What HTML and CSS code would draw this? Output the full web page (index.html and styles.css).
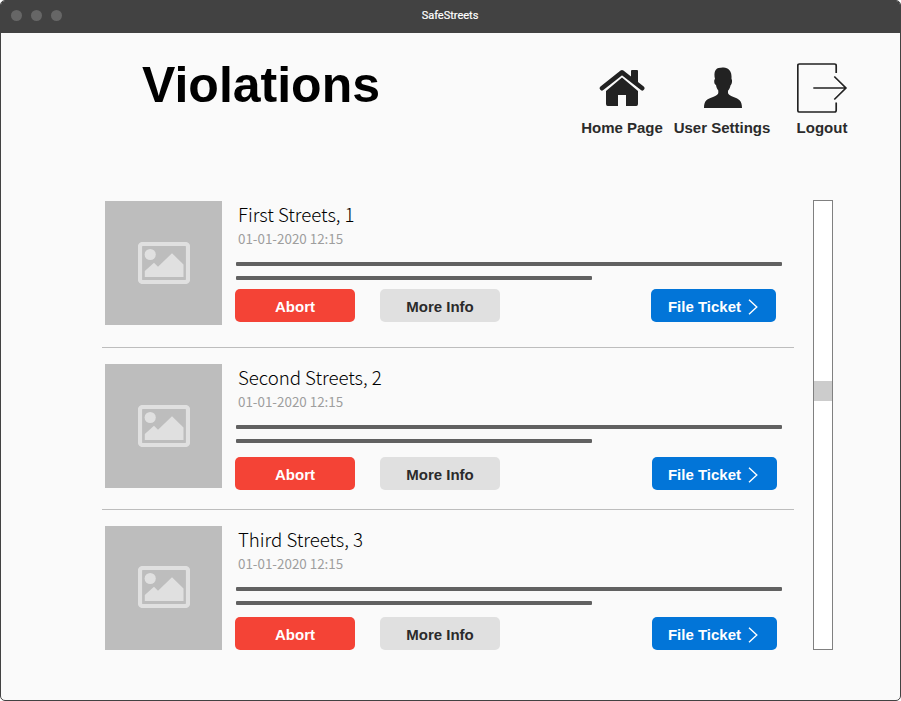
FILE: index.html
```html
<!DOCTYPE html>
<html lang="en">
<head>
<meta charset="utf-8">
<title>SafeStreets</title>
<link rel="stylesheet" href="styles.css">
</head>
<body>
<svg class="defs" aria-hidden="true">
  <symbol id="picture" viewBox="0 0 52 42">
    <rect x="2" y="2" width="48" height="38" rx="2.5" fill="none" stroke="#e0e0e0" stroke-width="4.2"/>
    <circle cx="12.2" cy="12.5" r="5.6" fill="#e0e0e0"/>
    <path d="M6.8 35V29L16 20.8L20 24.8L34 11.2L45.5 22.5V35Z" fill="#e0e0e0"/>
  </symbol>
  <symbol id="chevron" viewBox="0 0 10 16">
    <path d="M1 .8L8.8 8L1 15.2" fill="none" stroke="#fff" stroke-width="1.4"/>
  </symbol>
</svg>
<div class="window">
  <header class="titlebar">
    <div class="dots"><span></span><span></span><span></span></div>
    <div class="app-name">SafeStreets</div>
    <div></div>
  </header>
  <div class="top">
    <h1>Violations</h1>
    <nav>
      <a class="nav-item home">
        <svg viewBox="0 0 52 50"><path fill="#222" d="M10 41V28L26 14.600L42 28V41Q42 43 40.300 43H30V32H22V43H11.700Q10 43 10 41Z"/><path d="M5.900 25.200L26 9.400L46.300 25.200" fill="none" stroke="#222" stroke-width="4.600" stroke-linecap="round" stroke-linejoin="round"/><path fill="#222" d="M35 8Q35 7 36 7H41Q42 7 42 8V22L35 16.500Z"/></svg>
        <span>Home Page</span>
      </a>
      <a class="nav-item user">
        <svg viewBox="0 0 52 50"><path fill="#222" d="M7 45C7 37 10.500 36 16 34Q21 32.200 21.300 30V27.500C20 26 19.300 24 19 22Q17.200 21.500 17.200 18Q17.200 16.500 18 16C16.500 9.500 18 4.500 24 4.800C29 3.200 35.500 6 34.500 16Q35.300 16.500 35 19Q34.600 22 33.600 22.200C33 24.500 32.200 26.500 31 27.800V30Q31.300 32.200 36.500 34C42 36 45 37.500 45 45Z"/></svg>
        <span>User Settings</span>
      </a>
      <a class="nav-item logout">
        <svg viewBox="0 0 52 50"><path d="M39.200 10V2.700Q39.200 1 37.500 1H2.400Q.8 1 .8 2.700V47.300Q.8 49 2.400 49H37.500Q39.200 49 39.200 47.300V39.500M16.300 25H48.700M37.300 13.500L48.900 25L37.300 36.500" fill="none" stroke="#222" stroke-width="1.700"/></svg>
        <span>Logout</span>
      </a>
    </nav>
  </div>
  <main>
    <section class="list">
      <article class="row first">
        <div class="thumb"><svg><use href="#picture"/></svg></div>
        <div class="info">
          <h2>First Streets, 1</h2>
          <time>01-01-2020 12:15</time>
          <div class="bar"></div><div class="bar short"></div>
          <div class="actions"><button class="abort">Abort</button><button class="more">More Info</button><button class="file">File Ticket<svg><use href="#chevron"/></svg></button></div>
        </div>
      </article>
      <article class="row second">
        <div class="thumb"><svg><use href="#picture"/></svg></div>
        <div class="info">
          <h2>Second Streets, 2</h2>
          <time>01-01-2020 12:15</time>
          <div class="bar"></div><div class="bar short"></div>
          <div class="actions"><button class="abort">Abort</button><button class="more">More Info</button><button class="file">File Ticket<svg><use href="#chevron"/></svg></button></div>
        </div>
      </article>
      <article class="row third">
        <div class="thumb"><svg><use href="#picture"/></svg></div>
        <div class="info">
          <h2>Third Streets, 3</h2>
          <time>01-01-2020 12:15</time>
          <div class="bar"></div><div class="bar short"></div>
          <div class="actions"><button class="abort">Abort</button><button class="more">More Info</button><button class="file">File Ticket<svg><use href="#chevron"/></svg></button></div>
        </div>
      </article>
    </section>
    <div class="scroll"><div class="thumbbar"></div></div>
  </main>
</div>
</body>
</html>
```
FILE: styles.css
```css
* { box-sizing: border-box; margin: 0; }
body { background: #fff; font-family: "Liberation Sans", Arial, sans-serif; overflow: hidden; }
.defs { display: none; }
.window {
  width: 901px; height: 701px; overflow: hidden;
  border: 1px solid #424242; border-radius: 5px; background: #fafafa;
}
.titlebar {
  height: 32px; background: #424242; color: #fff;
  display: grid; grid-template-columns: 1fr auto 1fr; align-items: center;
}
.dots { display: flex; gap: 9px; padding: 0 0 4px 10px; }
.dots span { width: 11px; height: 11px; border-radius: 50%; background: #666; }
.app-name { font: 11px/14px Roboto, sans-serif; padding: 0 1px 2px 0; -webkit-text-stroke: .2px #fff; }
.top { height: 152px; display: flex; justify-content: space-between; padding: 24px 43px 0 141px; }
h1 { font-size: 50px; line-height: 56px; font-weight: 700; color: #000; }
nav { display: flex; padding-top: 6px; }
.nav-item {
  display: flex; flex-direction: column; align-items: center;
  font-size: 15px; line-height: 18px; font-weight: 700; color: #2b2b2b; white-space: nowrap;
}
.nav-item svg { width: 52px; height: 50px; margin-bottom: 6px; }
.home { width: 100px; }
.user { width: 100px; }
.user svg, .logout svg { margin-left: 2px; }
.logout { width: 100px; margin-right: -15px; }
main { display: flex; padding-left: 101px; }
.list { width: 692px; margin-right: 19px; }
.row { display: flex; height: 162px; padding: 16px 0 0 3px; border-bottom: 1px solid #bdbdbd; }
.first { height: 163px; }
.third { border-bottom: 0; }
.thumb { width: 117px; height: 124px; background: #bdbdbd; padding: 41px 0 0 33px; }
.third .thumb { padding-top: 40px; }
.thumb svg { display: block; width: 52px; height: 42px; }
.info { padding-left: 13px; width: 560px; }
h2 { font: 300 18.67px/26px "Noto Sans CJK SC", sans-serif; color: #000; padding-left: 3px; white-space: nowrap; letter-spacing: -.03px; }
time { display: block; height: 35px; font: 13.4px/22px "Noto Sans CJK SC", sans-serif; color: #9e9e9e; padding-left: 3px; }
.bar { width: 546px; height: 4px; margin: 0 0 10px 1px; border-radius: 1px; background: #616161; }
.bar.short { width: 356px; margin-bottom: 9px; }
.actions { display: flex; }
.second .actions { padding-top: 5px; }
.third .actions { padding-top: 3px; }
button {
  width: 120px; height: 33px; border: 0; border-radius: 5px; padding: 2px 0 0;
  font: 700 15px/18px "Liberation Sans", Arial, sans-serif; color: #fff;
  display: flex; align-items: center; justify-content: center;
}
.abort { background: #f44336; margin-right: 25px; }
.more { background: #e0e0e0; color: #2b2b2b; }
.file { width: 125px; margin-left: 151px; padding-right: 2px; background: #0275d8; }
.second .file, .third .file { margin-left: 152px; padding-right: 4px; }
.file svg { width: 10px; height: 16px; margin: 0 -1px 0 7px; }
.scroll { width: 20px; height: 450px; margin-top: 15px; border: 1px solid #808080; background: #fff; padding-top: 180px; }
.thumbbar { height: 20px; background: #ccc; }
```
